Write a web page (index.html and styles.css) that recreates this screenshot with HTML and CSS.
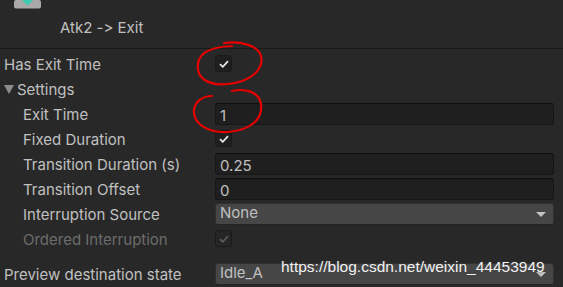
FILE: index.html
```html
<!DOCTYPE html>
<html lang="en">
<head>
<meta charset="UTF-8">
<meta name="viewport" content="width=device-width, initial-scale=1.0">
<title>Transition Inspector</title>
<link rel="stylesheet" href="styles.css">
</head>
<body>

<div class="inspector">
    <div class="header">
        <svg class="header-icon" width="28" height="9" viewBox="0 0 28 9">
            <rect x="0" y="0" width="27" height="8.5" rx="2" fill="#a9a9a9"/>
            <path d="M8 0 H19 L13.5 5.5 Z" fill="#3ccab0"/>
        </svg>
        <div class="header-title">Atk2 -&gt; Exit</div>
    </div>

    <div class="rows">
        <div class="row">
            <div class="label">Has Exit Time</div>
            <div class="value"><span class="check on"><svg width="10" height="8" viewBox="0 0 10 8"><path d="M1 4.2 L3.8 6.8 L9 1.2" fill="none" stroke="currentColor" stroke-width="1.8"/></svg></span></div>
        </div>
        <div class="row">
            <div class="label foldout"><span class="arrow"></span>Settings</div>
        </div>
        <div class="row nested">
            <div class="label">Exit Time</div>
            <div class="value"><div class="field">1</div></div>
        </div>
        <div class="row nested">
            <div class="label">Fixed Duration</div>
            <div class="value"><span class="check on"><svg width="10" height="8" viewBox="0 0 10 8"><path d="M1 4.2 L3.8 6.8 L9 1.2" fill="none" stroke="currentColor" stroke-width="1.8"/></svg></span></div>
        </div>
        <div class="row nested">
            <div class="label">Transition Duration (s)</div>
            <div class="value"><div class="field">0.25</div></div>
        </div>
        <div class="row nested">
            <div class="label">Transition Offset</div>
            <div class="value"><div class="field">0</div></div>
        </div>
        <div class="row nested">
            <div class="label">Interruption Source</div>
            <div class="value"><div class="dropdown">None<span class="caret"></span></div></div>
        </div>
        <div class="row nested disabled">
            <div class="label">Ordered Interruption</div>
            <div class="value"><span class="check"><svg width="10" height="8" viewBox="0 0 10 8"><path d="M1 4.2 L3.8 6.8 L9 1.2" fill="none" stroke="currentColor" stroke-width="1.6"/></svg></span></div>
        </div>
        <div class="row preview">
            <div class="label">Preview destination state</div>
            <div class="value"><div class="dropdown">Idle_A<span class="caret"></span></div></div>
        </div>
    </div>

    <div class="watermark">https://blog.csdn.net/weixin_44453949</div>

    <svg class="marks" width="563" height="287" viewBox="0 0 563 287">
        <path d="M224 43 C240 41 258 45 261 56 C264 70 250 82 228 84 C208 86 196 78 198 64 C199 53 210 47 232 46"
              fill="none" stroke="#e80000" stroke-width="2.2" stroke-linecap="round"/>
        <path d="M232 91 C246 88 259 92 261 104 C263 120 250 130 228 132 C208 133 193 124 194 110 C195 101 203 96 212 96"
              fill="none" stroke="#e80000" stroke-width="2.2" stroke-linecap="round"/>
    </svg>
</div>

</body>
</html>
```

FILE: styles.css
```css
html, body {
    margin: 0;
    padding: 0;
    background-color: #282828;
}
body {
    font-family: Inter, "Noto Sans", sans-serif;
    font-size: 15px;
    font-feature-settings: "calt" 0, "liga" 0;
    color: #c0c0c0;
}
.inspector {
    position: relative;
    width: 563px;
    height: 287px;
    overflow: hidden;
}
.header {
    height: 48px;
    border-bottom: 1px solid #191919;
    position: relative;
}
.header-icon {
    position: absolute;
    left: 14px;
    top: 0;
}
.header-title {
    padding-top: 18px;
    padding-left: 60px;
    line-height: 20px;
}
.rows {
    padding-top: 2px;
}
.row {
    display: grid;
    grid-template-columns: 215px 1fr;
    height: 25px;
    align-items: center;
    padding-right: 9px;
}
.row .label {
    padding-left: 4px;
    padding-top: 1px;
    white-space: nowrap;
}
.row.nested .label {
    padding-left: 23px;
}
.foldout {
    display: flex;
    align-items: center;
}
.foldout .arrow {
    width: 0;
    height: 0;
    border-left: 5px solid transparent;
    border-right: 5px solid transparent;
    border-top: 9px solid #8c8c8c;
    margin-right: 3px;
    margin-top: 1px;
}
.row.preview {
    margin-top: 10px;
}
.value {
    display: flex;
    align-items: center;
}
.field {
    flex: 1;
    box-sizing: border-box;
    height: 22px;
    padding-top: 2px;
    line-height: 19px;
    padding-left: 4px;
    background-color: #1f1f1f;
    border: 1px solid #161616;
    border-top-color: #0e0e0e;
    border-radius: 3px;
}
.dropdown {
    flex: 1;
    position: relative;
    box-sizing: border-box;
    height: 22px;
    line-height: 18px;
    padding-left: 4px;
    background-color: #464646;
    border: 1px solid #303030;
    border-bottom-color: #242424;
    border-radius: 3px;
}
.caret {
    position: absolute;
    right: 7px;
    top: 8px;
    border-left: 5px solid transparent;
    border-right: 5px solid transparent;
    border-top: 5px solid #c4c4c4;
}
.check {
    display: inline-flex;
    align-items: center;
    justify-content: center;
    width: 17px;
    height: 17px;
    background-color: #1f1f1f;
    border: 1px solid #1a1a1a;
    border-radius: 3px;
    color: #5e5e5e;
    box-sizing: border-box;
}
.check.on {
    color: #e4e4e4;
}
.row.disabled .label {
    color: #6c6c6c;
}
.row.disabled .check {
    background-color: #262626;
}
.watermark {
    position: absolute;
    left: 281px;
    top: 258px;
    font-family: "Liberation Sans", Arial, sans-serif;
    font-size: 15.5px;
    color: #f2f2f2;
    text-shadow: 0 0 2px #444;
}
.marks {
    position: absolute;
    left: 0;
    top: 0;
    pointer-events: none;
}
```
